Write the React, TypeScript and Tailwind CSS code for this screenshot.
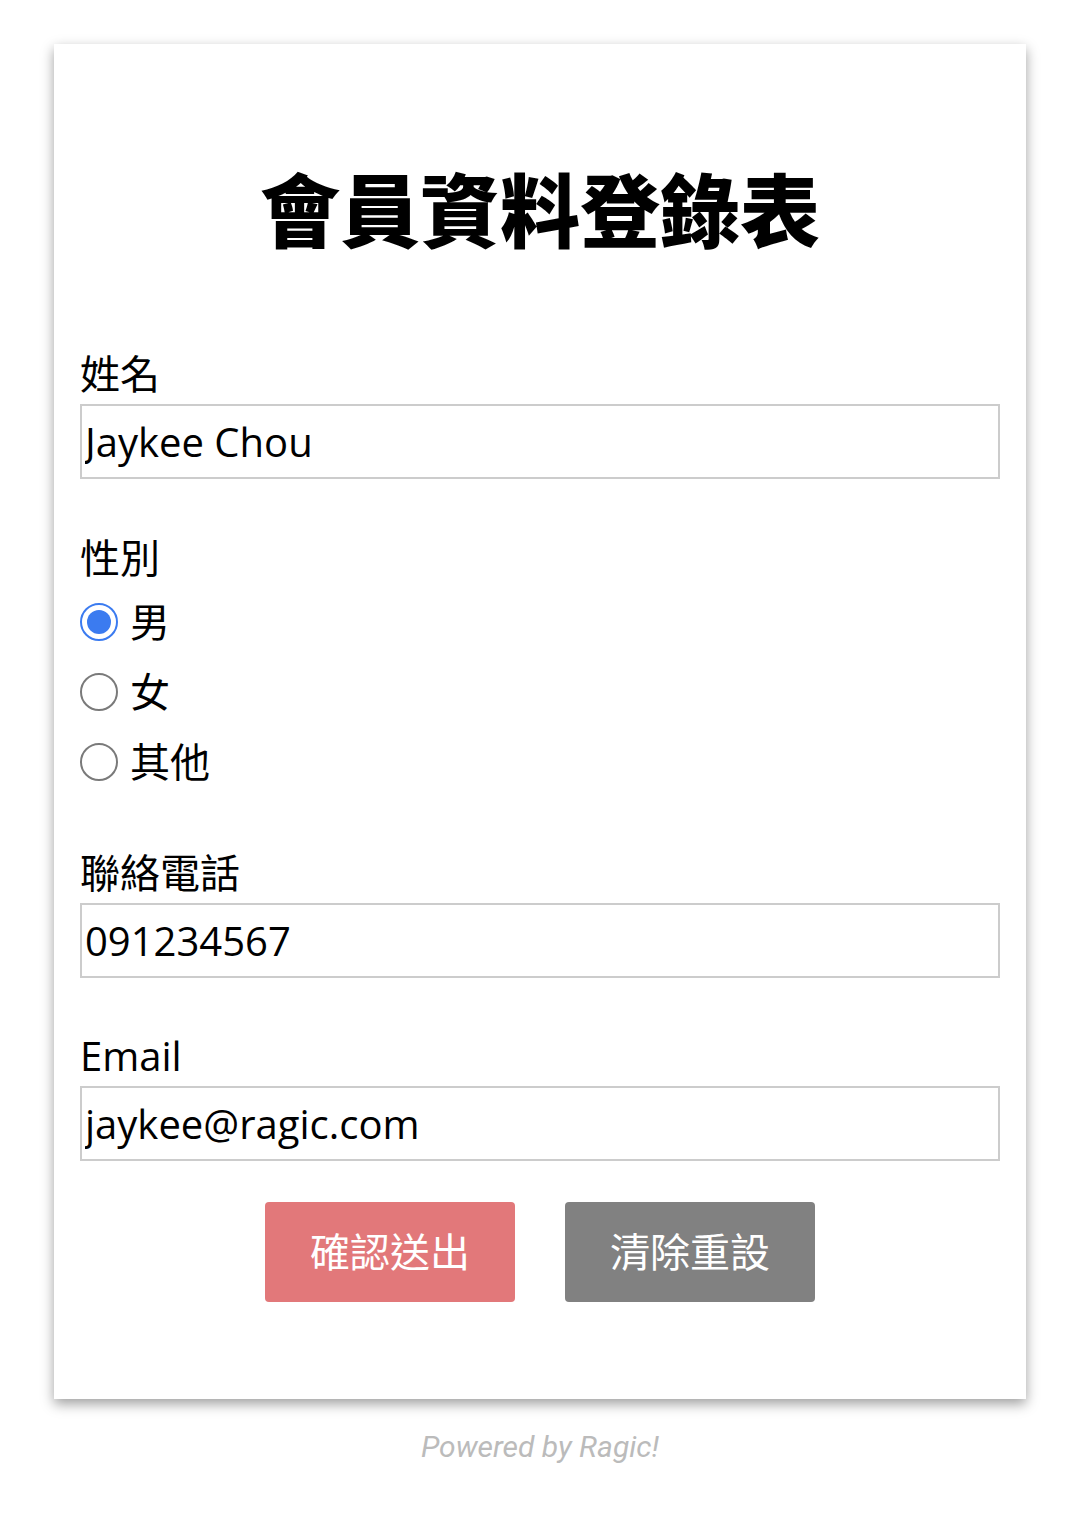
import React from 'react';

const font = "font-['Open_Sans','Noto_Sans_CJK_TC',sans-serif]";

const Field = ({ label, value, gap }: { label: string; value: string; gap: string }) => (
  <div className={gap}>
    <div className="text-[40px] leading-[56px] text-black">{label}</div>
    <input
      readOnly
      defaultValue={value}
      className={`mt-[2px] block w-full h-[75px] border-2 border-[#cccccc] px-[3px] text-[40px] text-black outline-none ${font}`}
    />
  </div>
);

const Radio = ({ label, checked }: { label: string; checked?: boolean }) => (
  <div className="flex items-center h-[70px]">
    {checked ? (
      <span className="w-[38px] h-[38px] rounded-full border-2 border-[#3b7bf0] flex items-center justify-center">
        <span className="w-[24px] h-[24px] rounded-full bg-[#3b7bf0]"></span>
      </span>
    ) : (
      <span className="w-[38px] h-[38px] rounded-full border-2 border-[#7a7a7a]"></span>
    )}
    <span className="ml-[12px] text-[40px] leading-[56px] text-black">{label}</span>
  </div>
);

export default function App() {
  return (
    <div className={`bg-white min-h-[1514px] pt-[44px] ${font}`}>
      <div className="mx-[54px] bg-white shadow-[0_5px_12px_rgba(0,0,0,0.38)] px-[26px] pt-[114px] pb-[97px]">
        <h1 className="text-center text-[80px] leading-[96px] font-black text-black font-['Noto_Sans_CJK_TC',sans-serif]">
          會員資料登錄表
        </h1>

        <Field label="姓名" value="Jaykee Chou" gap="mt-[92px]" />

        <div className="mt-[51px]">
          <div className="text-[40px] leading-[56px] text-black">性別</div>
          <div className="mt-[1px]">
            <Radio label="男" checked />
            <Radio label="女" />
            <Radio label="其他" />
          </div>
        </div>

        <Field label="聯絡電話" value="091234567" gap="mt-[48px]" />
        <Field label="Email" value="jaykee@ragic.com" gap="mt-[50px]" />

        <div className="mt-[41px] flex justify-center gap-[50px]">
          <button className="w-[250px] h-[100px] rounded-[4px] bg-[#e2787a] text-white text-[40px]">確認送出</button>
          <button className="w-[250px] h-[100px] rounded-[4px] bg-[#818181] text-white text-[40px]">清除重設</button>
        </div>
      </div>

      <div className="mt-[30px] text-center text-[30px] leading-[36px] italic text-[#bbbbbb] font-['Roboto',sans-serif]">
        Powered by Ragic!
      </div>
    </div>
  );
}
